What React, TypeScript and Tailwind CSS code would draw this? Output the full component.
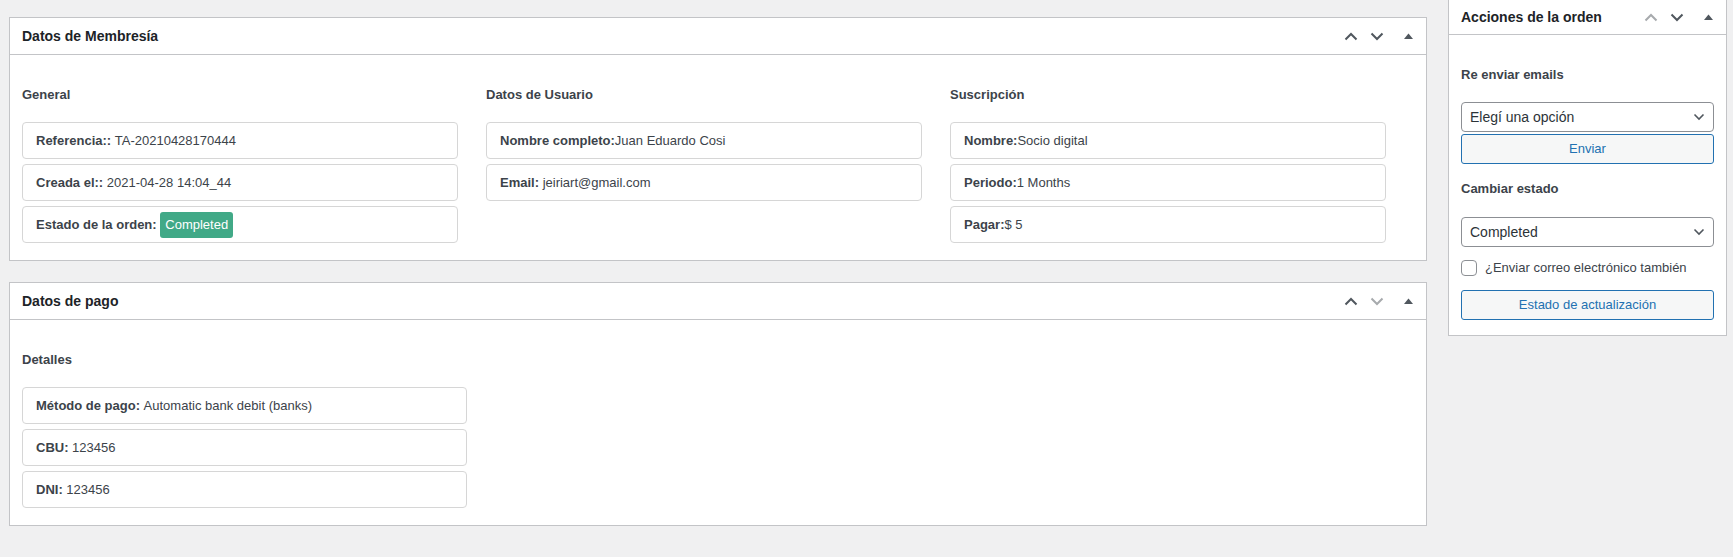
import React from "react";

const Up = ({ dim }: { dim?: boolean }) => (
  <svg width="14" height="9" viewBox="0 0 14 9" fill="none">
    <polyline points="1.5,7.5 7,2 12.5,7.5" stroke={dim ? "#a7aaad" : "#50575e"} strokeWidth="2" />
  </svg>
);
const Down = ({ dim }: { dim?: boolean }) => (
  <svg width="14" height="9" viewBox="0 0 14 9" fill="none">
    <polyline points="1.5,1.5 7,7 12.5,1.5" stroke={dim ? "#a7aaad" : "#50575e"} strokeWidth="2" />
  </svg>
);
const Tri = () => (
  <svg width="9" height="6" viewBox="0 0 9 6">
    <polygon points="0,6 4.5,0.5 9,6" fill="#50575e" />
  </svg>
);

function Controls({ upDim, downDim }: { upDim?: boolean; downDim?: boolean }) {
  return (
    <div className="flex items-center h-full">
      <div className="w-[26px] flex justify-center items-center"><Up dim={upDim} /></div>
      <div className="w-[26px] flex justify-center items-center"><Down dim={downDim} /></div>
      <div className="w-[36px] flex justify-center items-center"><Tri /></div>
    </div>
  );
}

function Card({ children }: { children: React.ReactNode }) {
  return (
    <div className="h-[37px] border border-[#d6d6d6] rounded-[4px] bg-white flex items-center pl-[13px] text-[13px] text-[#3c434a] whitespace-nowrap">
      {children}
    </div>
  );
}

function Col({ title, children, w }: { title: string; children: React.ReactNode; w: string }) {
  return (
    <div>
      <div className="h-[20px] leading-[20px] text-[13px] font-bold text-[#3c434a] mb-[17px]">{title}</div>
      <div className={`flex flex-col gap-[5px] ${w}`}>{children}</div>
    </div>
  );
}

function Panel({ title, children, upDim, downDim, pb }: { title: string; children: React.ReactNode; upDim?: boolean; downDim?: boolean; pb: string }) {
  return (
    <div className="border border-[#c3c4c7] bg-white">
      <div className="h-[37px] border-b border-[#c3c4c7] flex items-center justify-between pl-[12px]">
        <h2 className="text-[14px] font-bold text-[#1d2327]">{title}</h2>
        <Controls upDim={upDim} downDim={downDim} />
      </div>
      <div className={`px-[12px] pt-[30px] ${pb}`}>{children}</div>
    </div>
  );
}

export default function App() {
  return (
    <div
      className="min-h-[557px] bg-[#f0f0f1] flex items-start overflow-hidden"
      style={{ fontFamily: '"Liberation Sans", Arial, sans-serif' }}
    >
      <div className="ml-[9px] mt-[17px] w-[1418px] shrink-0 flex flex-col gap-[21px]">
        <Panel title="Datos de Membresía" pb="pb-[17px]">
          <div className="grid grid-cols-[464px_464px_464px]">
            <Col title="General" w="w-[436px]">
              <Card><b>Referencia::</b>&nbsp;TA-20210428170444</Card>
              <Card><b>Creada el::</b>&nbsp;2021-04-28 14:04_44</Card>
              <Card>
                <b>Estado de la orden:</b>&nbsp;
                <span className="h-[26px] px-[5px] rounded-[3px] bg-[#41a987] text-white flex items-center">Completed</span>
              </Card>
            </Col>
            <Col title="Datos de Usuario" w="w-[436px]">
              <Card><b>Nombre completo:</b>Juan Eduardo Cosi</Card>
              <Card><b>Email:</b>&nbsp;jeiriart@gmail.com</Card>
            </Col>
            <Col title="Suscripción" w="w-[436px]">
              <Card><b>Nombre:</b>Socio digital</Card>
              <Card><b>Periodo:</b>1 Months</Card>
              <Card><b>Pagar:</b>$ 5</Card>
            </Col>
          </div>
        </Panel>
        <Panel title="Datos de pago" downDim pb="pb-[17px]">
          <Col title="Detalles" w="w-[445px]">
            <Card><b>Método de pago:</b>&nbsp;Automatic bank debit (banks)</Card>
            <Card><b>CBU:</b>&nbsp;123456</Card>
            <Card><b>DNI:</b>&nbsp;123456</Card>
          </Col>
        </Panel>
      </div>

      <div className="ml-[21px] mt-[-1px] w-[279px] shrink-0 border border-[#c3c4c7] bg-white">
        <div className="h-[35px] border-b border-[#c3c4c7] flex items-center justify-between pl-[12px]">
          <h2 className="text-[14px] font-bold text-[#1d2327]">Acciones de la orden</h2>
          <Controls upDim />
        </div>
        <div className="px-[12px] pt-[30px] pb-[15px] text-[13px] text-[#3c434a]">
          <div className="h-[20px] leading-[20px] font-bold mb-[17px]">Re enviar emails</div>
          <div className="h-[30px] border border-[#8c8f94] rounded-[4px] flex items-center justify-between pl-[8px] pr-[8px] text-[14px] text-[#2c3338]">
            <span>Elegí una opción</span>
            <svg width="12" height="8" viewBox="0 0 12 8" fill="none">
              <polyline points="1.5,1.5 6,6 10.5,1.5" stroke="#50575e" strokeWidth="1.6" />
            </svg>
          </div>
          <div className="mt-[2px] h-[30px] border border-[#2271b1] rounded-[3px] bg-[#f6f7f7] text-[#2271b1] flex items-center justify-center">
            Enviar
          </div>
          <div className="mt-[15px] h-[20px] leading-[20px] font-bold mb-[18px]">Cambiar estado</div>
          <div className="h-[30px] border border-[#8c8f94] rounded-[4px] flex items-center justify-between pl-[8px] pr-[8px] text-[14px] text-[#2c3338]">
            <span>Completed</span>
            <svg width="12" height="8" viewBox="0 0 12 8" fill="none">
              <polyline points="1.5,1.5 6,6 10.5,1.5" stroke="#50575e" strokeWidth="1.6" />
            </svg>
          </div>
          <div className="mt-[13px] h-[16px] flex items-center gap-[8px]">
            <span className="w-[16px] h-[16px] border border-[#8c8f94] rounded-[4px] bg-white inline-block shrink-0" />
            <span className="leading-[16px]">¿Enviar correo electrónico también</span>
          </div>
          <div className="mt-[14px] h-[30px] border border-[#2271b1] rounded-[3px] bg-[#f6f7f7] text-[#2271b1] flex items-center justify-center">
            Estado de actualización
          </div>
        </div>
      </div>
    </div>
  );
}
